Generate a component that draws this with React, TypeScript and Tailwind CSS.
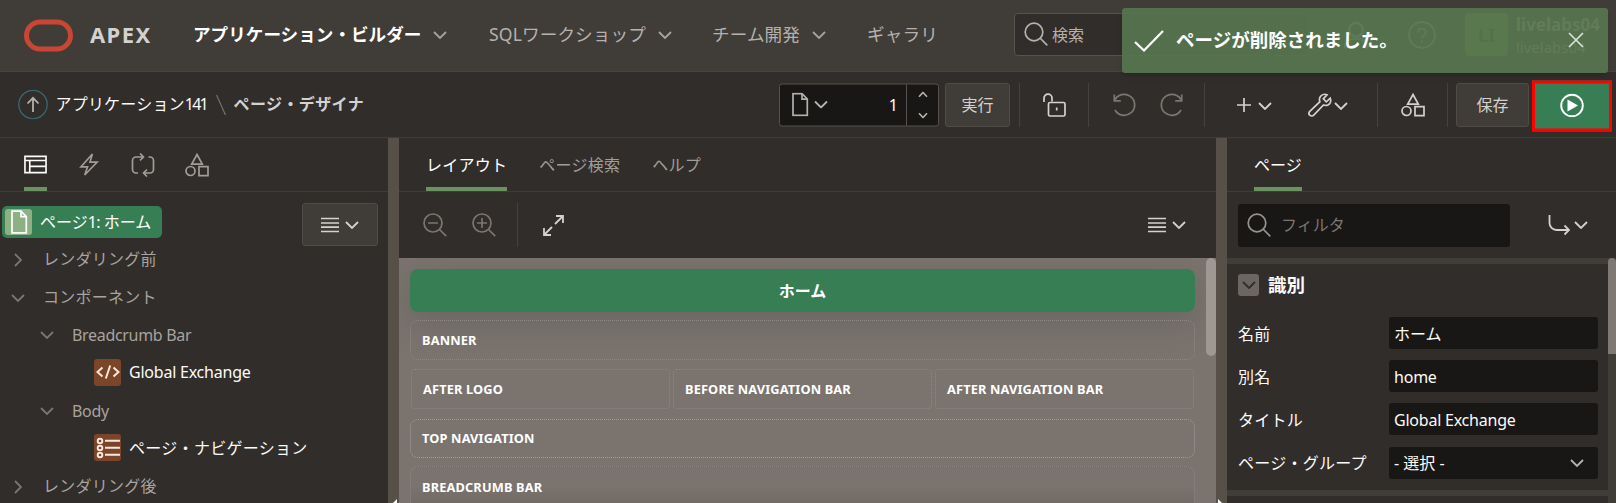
import type { ReactNode } from "react";

type IconProps = { className?: string };

function Svg({ className = "", box = "0 0 24 24", sw = 1.7, children }: { className?: string; box?: string; sw?: number; children: ReactNode }) {
  return (
    <svg viewBox={box} fill="none" stroke="currentColor" strokeWidth={sw} className={`shrink-0 ${className}`}>
      {children}
    </svg>
  );
}

const Chevron = ({ className = "" }: IconProps) => (
  <Svg box="0 0 14 8" sw={1.8} className={`h-2 w-3.5 ${className}`}>
    <path d="M1 1l6 6 6-6" />
  </Svg>
);

const SmallChevron = ({ className = "" }: IconProps) => (
  <Svg box="0 0 10 6" sw={1.6} className={`h-1.5 w-2.5 ${className}`}>
    <path d="M1 .8l4 4.200 4-4.200" />
  </Svg>
);

const Shapes = ({ className = "" }: IconProps) => (
  <Svg className={`size-6 ${className}`}>
    <path d="M12 1.500l5.300 9.700H6.700z" />
    <circle cx="5.500" cy="18" r="4.500" />
    <path d="M14 13.700h9v9h-9z" />
  </Svg>
);

const FileIcon = ({ className = "" }: IconProps) => (
  <Svg box="0 0 18 24" className={`h-6 w-[18px] ${className}`}>
    <path d="M2 1.200h9l5.300 5.300v16.300H2z" />
    <path d="M11 1.200v5.500h5.300" />
  </Svg>
);

const SearchIcon = ({ className = "" }: IconProps) => (
  <Svg className={`size-6 ${className}`}>
    <circle cx="10" cy="10" r="8.800" />
    <path d="M16 16l7.300 7.300" />
  </Svg>
);

const Lines = () => (
  <Svg box="0 0 18 16" className="h-4 w-[18px]">
    <path d="M0 1.500h18M0 6h18M0 10.200h18M0 14.500h18" />
  </Svg>
);

const Sep = ({ className = "" }: IconProps) => <div className={`h-11 w-px shrink-0 bg-[#45413d] ${className}`} />;

function NavItem({ label, className = "", menu = true, bold = false }: { label: string; className?: string; menu?: boolean; bold?: boolean }) {
  return (
    <div className={`flex shrink-0 items-center ${className}`}>
      <span className={`text-[17.600px] ${bold ? "font-bold text-white" : "tracking-[0.120px] text-[#b5b1ad]"}`}>{label}</span>
      {menu && <Chevron className="mt-0.5 ml-3 text-[#a8a39e]" />}
    </div>
  );
}

function Header() {
  return (
    <header className="flex h-[72px] shrink-0 items-center border-b border-[#47433f] bg-[#403c38]">
      <div className="ml-6 h-8 w-[49px] shrink-0 -translate-y-[0.500px] rounded-full border-[5.500px] border-[#c74634]" />
      <div className="ml-[17px] w-[103px] shrink-0 -translate-y-px text-[22px] font-bold tracking-[1.400px] text-[#d4d2cf]">APEX</div>
      <NavItem label="アプリケーション・ビルダー" bold className="w-[296px] -translate-y-px" />
      <NavItem label="SQLワークショップ" className="w-[223px] -translate-y-px" />
      <NavItem label="チーム開発" className="w-[155px] -translate-y-px" />
      <NavItem label="ギャラリ" menu={false} className="w-[147px] -translate-y-px" />
      <div className="flex h-[43px] w-[295px] shrink-0 -translate-y-px items-center rounded border border-[#57524d] bg-[#312d2a] pl-[9px] text-[#b5b1ad]">
        <SearchIcon className="-mt-px" />
        <span className="ml-1 text-base">検索</span>
      </div>
      <Svg className="ml-8 h-8 w-[30px] text-[#c8c5c2]" sw={1.800}>
        <circle cx="12" cy="7" r="5.500" />
        <path d="M3 22c0-6 4-8 9-8s9 2 9 8" />
      </Svg>
      <Svg className="ml-[37px] size-7 -translate-y-px text-[#c8c5c2]" box="0 0 28 28" sw={1.800}>
        <circle cx="14" cy="14" r="13" />
        <path d="M10 11.500c0-5 8-5 8-.5 0 3-4 3-4 6M14 19.500v2" />
      </Svg>
      <div className="ml-[29px] flex size-[43px] shrink-0 -translate-y-px items-center justify-center rounded bg-[#8fae45] text-lg font-bold text-[#403c38]">LI</div>
      <div className="ml-2 flex flex-col leading-[22px] text-[#dddbd9]">
        <span className="text-[17px] font-bold">livelabs04</span>
        <span className="text-[15px]">livelabs04</span>
      </div>
    </header>
  );
}

function Toast() {
  return (
    <div className="absolute top-2 left-[1122px] flex h-[65px] w-[486px] items-center rounded-[3px] bg-[#56744f]/93 text-white shadow-md">
      <Svg box="0 0 30 22" sw={2.200} className="ml-3 h-[22px] w-[30px]">
        <path d="M1 12l9 8.500L29 1" />
      </Svg>
      <span className="ml-3 -translate-y-px text-[18.500px] font-bold">ページが削除されました。</span>
      <Svg box="0 0 16 16" sw={1.600} className="mr-6 ml-auto size-4 -translate-y-px text-[#dce4da]">
        <path d="M1 1l14 14M15 1L1 15" />
      </Svg>
    </div>
  );
}

function Toolbar() {
  return (
    <div className="flex h-[66px] shrink-0 items-center border-b border-[#403c38] pt-px text-[#d4d1ce]">
      <Svg box="0 0 30 30" sw={1.300} className="ml-[17.500px] size-[30px] -translate-y-[0.500px]">
        <circle cx="15" cy="15" r="14.200" stroke="#3b6775" />
        <path d="M15 22.500V8.500M9.500 14L15 8.300l5.500 5.700" strokeWidth="1.800" stroke="#b5b1ad" />
      </Svg>
      <div className="ml-2 flex w-[160px] shrink-0 -translate-y-px items-center text-base text-[#fcfbfa]">
        <span className="tracking-[0.200px]">アプリケーション</span>
        <span className="-tracking-[1.800px]">141</span>
      </div>
      <Svg box="0 0 10 20" sw={1.200} className="h-5 w-2.5 text-[#77726d]">
        <path d="M.5 0l9 20" />
      </Svg>
      <span className="ml-2 -translate-y-px text-base font-bold tracking-[0.400px]">ページ・デザイナ</span>
      <div className="mr-[6px] ml-auto flex h-[43px] w-40 shrink-0 -translate-y-[0.500px] items-center rounded-[3px] border border-[#57524d] bg-[#191715]">
        <FileIcon className="ml-[11px] text-[#b5b1ad]" />
        <Chevron className="ml-[5px] text-[#b5b1ad]" />
        <span className="mr-2 ml-auto text-base text-white">1</span>
        <div className="flex h-full w-8 shrink-0 flex-col items-center justify-between border-l border-[#57524d] py-[7px] text-[#b5b1ad]">
          <SmallChevron className="rotate-180" />
          <SmallChevron />
        </div>
      </div>
      <button className="h-11 w-[65px] shrink-0 rounded-[3px] border border-[#504b46] bg-[#403c38] pb-px text-base">実行</button>
      <Sep className="ml-[9px]" />
      <Svg className="ml-[22px] size-6">
        <path d="M2 9V5.200a4 4 0 018 0V8.500" />
        <rect x="6.500" y="9.500" width="16.500" height="13.500" rx="1.500" />
        <path d="M14.700 14.500v3" />
      </Svg>
      <Sep className="ml-[22px]" />
      <Svg className="ml-6 size-6 text-[#7b7671]">
        <path d="M1.300 1.500v6.300h6.500M1.600 7.500A10.500 10.500 0 1 1 2 17" />
      </Svg>
      <Svg className="ml-[22px] size-6 text-[#7b7671]">
        <path d="M22.700 1.500v6.300h-6.500M22.400 7.500A10.500 10.500 0 1 0 22 17" />
      </Svg>
      <Sep className="ml-[21px]" />
      <Svg box="0 0 14 14" className="ml-8 size-3.5">
        <path d="M7 0v14M0 7h14" />
      </Svg>
      <Chevron className="mt-px ml-[7px]" />
      <Svg className="ml-9 size-6">
        <path d="M22.300 5.200l-4 3.600-3-3L19 1.800c-3-1.200-6 .1-7.100 2.500-.7 1.600-.4 3.300 0 4.400L1.800 18.300a2.700 2.700 0 003.900 3.900L15.500 12c1.300.5 3 .6 4.500-.1 2.400-1.100 3.300-4 2.300-6.700z" />
      </Svg>
      <Chevron className="mt-px ml-0.5" />
      <Sep className="ml-[29px]" />
      <Shapes className="ml-[23px]" />
      <Sep className="ml-[22px]" />
      <button className="ml-2 h-11 w-[73px] shrink-0 rounded-[3px] border border-[#504b46] bg-[#403c38] pb-px text-base">保存</button>
      <div className="mr-1 ml-[3px] flex h-[51px] w-20 shrink-0 translate-y-[0.500px] items-center justify-center border-[3px] border-[#ff0000] bg-[#387e54] text-white">
        <Svg className="size-6" sw={1.900}>
          <circle cx="12" cy="12" r="10.800" />
          <path d="M7.500 6v12l10.500-6z" fill="currentColor" stroke="none" />
        </Svg>
      </div>
    </div>
  );
}

const Tab = ({ children, active = false }: { children: ReactNode; active?: boolean }) => (
  <div className={`flex h-[53px] shrink-0 items-center border-b-4 pt-1 text-base ${active ? "border-[#6b9362] text-white" : "border-transparent text-[#a29d98]"}`}>{children}</div>
);

function TreeRow({ label, indent, open, latin = false }: { label: string; indent: string; open: boolean; latin?: boolean }) {
  return (
    <div className={`flex h-[37.800px] shrink-0 items-center text-[#a8a39f] ${indent}`}>
      <Chevron className={`mt-0.5 text-[#7b7671] ${open ? "" : "-rotate-90"}`} />
      <span className={`ml-[18px] text-base ${latin ? "mt-px -tracking-[0.320px]" : "tracking-[0.250px]"}`}>{label}</span>
    </div>
  );
}

function TreeLeaf({ label, latin = false, children }: { label: string; latin?: boolean; children: ReactNode }) {
  return (
    <div className="flex h-[37.800px] shrink-0 items-center pl-[94px] text-[#fcfbfa]">
      <div className="flex size-[27px] items-center justify-center rounded-[3px] bg-[#7b452a]">{children}</div>
      <span className={`ml-2 text-base ${latin ? "-tracking-[0.220px]" : "tracking-[0.300px]"}`}>{label}</span>
    </div>
  );
}

function TreePanel() {
  return (
    <section className="flex w-[388px] shrink-0 flex-col">
      <div className="flex h-[54px] shrink-0 gap-[33px] border-b border-[#403c38] pl-6">
        <Tab active>
          <Svg className="size-[23px]">
            <path d="M1 3.500h22v17H1zM1 7.800h22M6 7.800v12.700M6 14h17" />
          </Svg>
        </Tab>
        <Tab>
          <Svg className="-ml-0.5 size-[23px]">
            <path d="M15 1L3 14.500h7L7 23l13-13.500h-7.500z" />
          </Svg>
        </Tab>
        <Tab>
          <Svg className="-mr-1 -ml-[3px] size-6">
            <path d="M7 20H5a3.500 3.500 0 01-3.500-3.500v-9A3.500 3.500 0 015 4h7M9 .5L12.500 4 9 7.500M17.500 4H19a3.500 3.500 0 013.500 3.500v9A3.500 3.500 0 0119 20h-6.500M16 16.500L12.500 20l3.500 3.500" />
          </Svg>
        </Tab>
        <Tab>
          <Shapes className="ml-px" />
        </Tab>
      </div>
      <div className="flex">
        <div className="mt-[14px] ml-0.5 flex h-8 w-40 items-center rounded-[5px] bg-[#387e54] pl-[3px] text-white">
          <div className="flex h-[26px] w-[27px] items-center justify-center rounded-[3px] bg-[#8eb183]">
            <FileIcon />
          </div>
          <span className="ml-2 flex whitespace-pre text-base">
            <span>ページ</span>
            <span className="-tracking-[0.500px]">1: </span>
            <span>ホーム</span>
          </span>
        </div>
        <div className="mt-[11px] mr-2.5 ml-auto flex h-[43px] w-[76px] items-center justify-center gap-1.5 rounded-[3px] border border-[#504b46] bg-[#403c38] text-[#d4d1ce]">
          <Lines />
          <Chevron />
        </div>
      </div>
      <div className="-mt-1.5 flex flex-col">
        <TreeRow label="レンダリング前" indent="pl-[11px]" open={false} />
        <TreeRow label="コンポーネント" indent="pl-[11px]" open />
        <TreeRow label="Breadcrumb Bar" indent="pl-10" open latin />
        <TreeLeaf label="Global Exchange" latin>
          <Svg sw={2} className="size-6 text-[#fbe9dd]">
            <path d="M6.500 7.500L1.500 12l5 4.500M17.500 7.500l5 4.500-5 4.500M14.200 5.500L9.800 18.500" />
          </Svg>
        </TreeLeaf>
        <TreeRow label="Body" indent="pl-10" open latin />
        <TreeLeaf label="ページ・ナビゲーション">
          <Svg sw={1.900} className="size-6 text-[#fbe9dd]">
            <circle cx="4" cy="5" r="2.300" />
            <circle cx="4" cy="12" r="2.300" />
            <circle cx="4" cy="19" r="2.300" />
            <path d="M9 4.800h15M9 11.800h15M9 18.800h15" />
          </Svg>
        </TreeLeaf>
        <TreeRow label="レンダリング後" indent="pl-[11px]" open={false} />
      </div>
    </section>
  );
}

function Splitter({ mirrored = false }: { mirrored?: boolean }) {
  return (
    <div className="flex w-[11px] shrink-0 items-end bg-[#565049]">
      <Svg box="0 0 4 4" className={`h-1 w-1 text-white ${mirrored ? "ml-0.5" : "mr-0.5 ml-auto -scale-x-100"}`}>
        <path d="M0 0l4 4H0z" fill="currentColor" stroke="none" />
      </Svg>
    </div>
  );
}

const Slot = ({ label, className = "" }: { label: string; className?: string }) => (
  <div className={`flex items-center border border-dotted pt-px pl-[11px] text-[12.800px] font-bold tracking-[0.140px] text-white ${className}`}>{label}</div>
);

function LayoutPanel() {
  return (
    <section className="flex w-[817px] shrink-0 flex-col">
      <div className="flex h-[54px] shrink-0 gap-8 border-b border-[#403c38] pl-[27px] tracking-[0.250px]">
        <Tab active>レイアウト</Tab>
        <Tab>ページ検索</Tab>
        <Tab>ヘルプ</Tab>
      </div>
      <div className="flex h-[66px] shrink-0 items-center pl-6 text-[#7b7671]">
        <Svg className="size-6">
          <circle cx="10" cy="10" r="9" />
          <path d="M16.500 16.500l6.700 6.700M5 10h10" />
        </Svg>
        <Svg className="ml-[25px] size-6">
          <circle cx="10" cy="10" r="9" />
          <path d="M16.500 16.500l6.700 6.700M5 10h10M10 5v10" />
        </Svg>
        <Sep className="ml-[21px]" />
        <Svg className="ml-[25px] size-[21px] text-[#d4d1ce]" box="0 0 21 21" sw={1.800}>
          <path d="M12 9l8-8M13 1h7v7M9 12l-8 8M1 13v7h7" />
        </Svg>
        <div className="mr-[30px] ml-auto flex items-center gap-1.5 text-[#d4d1ce]">
          <Lines />
          <Chevron />
        </div>
      </div>
      <div className="flex min-h-0 grow overflow-hidden bg-[#7b736e]">
        <div className="ml-[11px] flex w-[785px] shrink-0 flex-col pt-[11px]">
          <div className="flex h-[43px] shrink-0 items-center justify-center rounded-lg bg-[#387e54] text-base font-bold text-white shadow-[0_10px_32px_rgba(70,80,70,0.35)]">ホーム</div>
          <Slot label="BANNER" className="mt-2 h-10 shrink-0 rounded-lg border-[#8e8884]" />
          <div className="mx-px mt-[9px] grid h-10 shrink-0 grid-cols-3 gap-[3px]">
            <Slot label="AFTER LOGO" className="rounded border-[#8e8884]" />
            <Slot label="BEFORE NAVIGATION BAR" className="rounded border-[#8e8884]" />
            <Slot label="AFTER NAVIGATION BAR" className="rounded border-[#8e8884]" />
          </div>
          <Slot label="TOP NAVIGATION" className="mt-2.5 h-[39px] shrink-0 rounded-lg border-[#a19c98]" />
          <Slot label="BREADCRUMB BAR" className="mt-2 h-[41px] shrink-0 rounded-t-lg border-b-0 border-[#8e8884] bg-linear-to-b from-transparent from-50% to-[#6f6964]" />
        </div>
        <div className="ml-auto h-[98px] w-2.5 rounded-full bg-[#9e9893]" />
      </div>
    </section>
  );
}

function Field({ label, value, select = false, latin = false }: { label: string; value: string; select?: boolean; latin?: boolean }) {
  return (
    <div className="flex h-8 shrink-0 items-center">
      <span className="w-[151px] shrink-0 pt-px text-base tracking-[0.250px]">{label}</span>
      <div className="flex h-full w-[209px] items-center rounded-[3px] bg-[#191715] px-[5px]">
        <span className={`pt-px text-base ${latin ? "-tracking-[0.220px]" : ""}`}>{value}</span>
        {select && <Chevron className="mr-[9px] ml-auto text-[#b5b1ad]" />}
      </div>
    </div>
  );
}

function PropertyPanel() {
  return (
    <section className="flex w-[389px] shrink-0 flex-col">
      <div className="flex h-[54px] shrink-0 border-b border-[#403c38] pl-[27px]">
        <Tab active>ページ</Tab>
      </div>
      <div className="flex h-[66px] shrink-0 items-center pl-[11px]">
        <div className="flex h-[43px] w-[272px] items-center rounded-[3px] bg-[#191715] pl-[9px] text-[#97928d]">
          <SearchIcon />
          <span className="ml-2.5 text-base text-[#7b7671]">フィルタ</span>
        </div>
        <Svg box="0 0 22 22" sw={1.800} className="ml-[38px] size-[22px] text-[#d4d1ce]">
          <path d="M1.500 1v8a7 7 0 007 7H21M16.500 11.500L21 16l-4.500 4.500" />
        </Svg>
        <Chevron className="ml-1 text-[#d4d1ce]" />
      </div>
      <div className="flex min-h-0 grow overflow-hidden">
        <div className="flex w-[381px] shrink-0 flex-col text-[#fcfbfa]">
          <div className="h-1.5 shrink-0 bg-[#403c38]" />
          <div className="mt-2.5 mb-[21px] ml-[11px] flex h-[22px] shrink-0 items-center">
            <div className="flex h-[22px] w-[21px] items-center justify-center rounded-[3px] bg-[#6b6662] text-[#312d2a]">
              <Chevron />
            </div>
            <span className="ml-[9px] text-[18.500px] font-bold">識別</span>
          </div>
          <div className="ml-[11px] flex flex-col gap-[11.200px]">
            <Field label="名前" value="ホーム" />
            <Field label="別名" value="home" latin />
            <Field label="タイトル" value="Global Exchange" latin />
            <Field label="ページ・グループ" value="- 選択 -" select />
          </div>
          <div className="mt-[11px] h-1.5 shrink-0 bg-[#403c38]" />
        </div>
        <div className="w-2 bg-[#403c38]">
          <div className="h-24 rounded-t bg-[#7e7975]" />
        </div>
      </div>
    </section>
  );
}

export default function App() {
  return (
    <div className="relative flex h-[503px] w-[1616px] flex-col overflow-hidden bg-[#312d2a] font-['Noto_Sans','Noto_Sans_CJK_JP',sans-serif]">
      <Header />
      <Toolbar />
      <main className="flex min-h-0 grow">
        <TreePanel />
        <Splitter />
        <LayoutPanel />
        <Splitter mirrored />
        <PropertyPanel />
      </main>
      <Toast />
    </div>
  );
}
